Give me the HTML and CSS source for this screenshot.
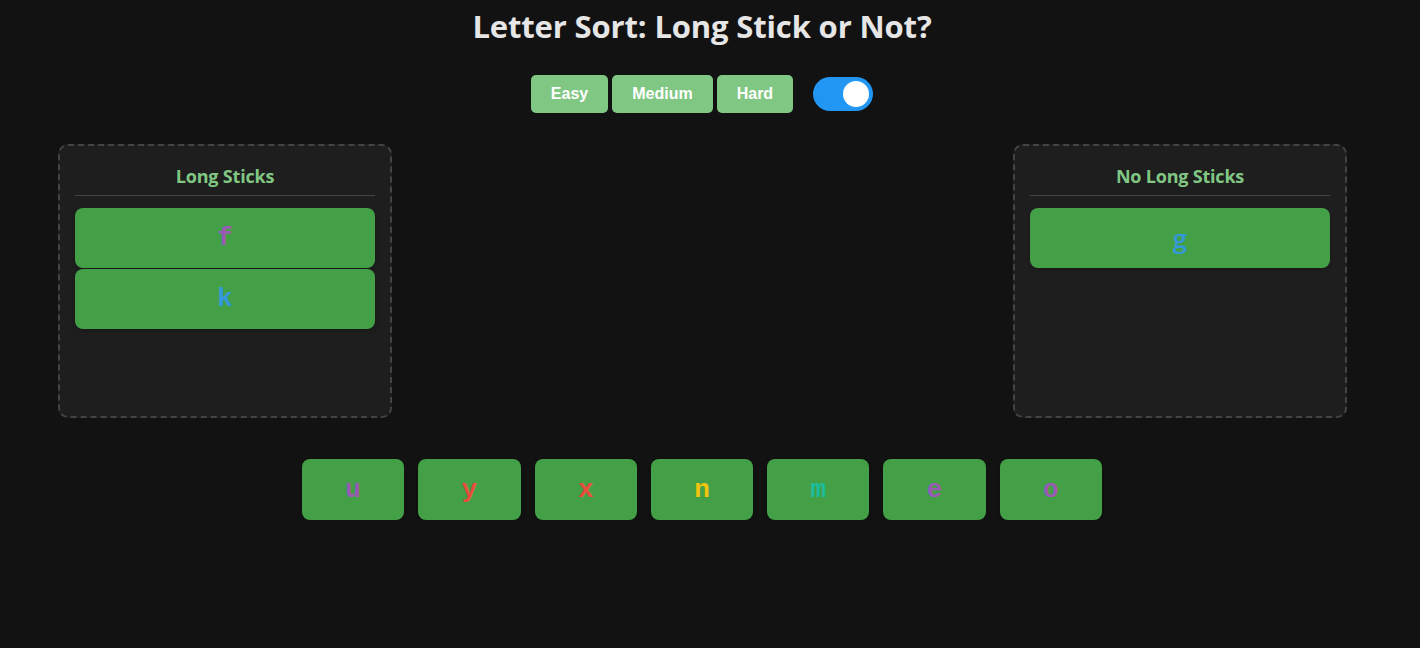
FILE: index.html
```html
<!DOCTYPE html>
<html lang="en">
<head>
<meta charset="utf-8">
<title>Letter Sort</title>
<link rel="stylesheet" href="styles.css">
</head>
<body>
<div class="app">
  <h1 class="title">Letter Sort: Long Stick or Not?</h1>
  <div class="controls">
    <button class="level">Easy</button>
    <button class="level">Medium</button>
    <button class="level">Hard</button>
    <label class="switch"><span class="knob"></span></label>
  </div>
  <div class="zones">
    <div class="zone">
      <h3 class="zone-title">Long Sticks</h3>
      <div class="zone-list">
        <div class="card"><span class="c-purple">f</span></div>
        <div class="card"><span class="c-blue">k</span></div>
      </div>
    </div>
    <div class="zone">
      <h3 class="zone-title">No Long Sticks</h3>
      <div class="zone-list">
        <div class="card"><span class="c-blue sans">g</span></div>
      </div>
    </div>
  </div>
  <div class="pool">
    <div class="card pool-card"><span class="c-purple">u</span></div>
    <div class="card pool-card"><span class="c-red">y</span></div>
    <div class="card pool-card"><span class="c-red">x</span></div>
    <div class="card pool-card"><span class="c-yellow">n</span></div>
    <div class="card pool-card"><span class="c-teal">m</span></div>
    <div class="card pool-card"><span class="c-purple">e</span></div>
    <div class="card pool-card"><span class="c-purple">o</span></div>
  </div>
</div>
</body>
</html>
```

FILE: styles.css
```css
html, body {
  margin: 0;
  padding: 0;
  background: #121212;
}
body {
  font-family: "Open Sans", "Noto Sans", sans-serif;
  color: #e0e0e0;
}
.app {
  width: 1404px;
}
.title {
  margin: 4px 0 0;
  text-align: center;
  font-size: 31px;
  line-height: 44px;
  font-weight: 700;
  color: #e6e6e6;
  letter-spacing: -0.15px;
}
.controls {
  margin-top: 27px;
  display: flex;
  justify-content: center;
  align-items: center;
  gap: 4px;
}
.level {
  background: #81c784;
  color: #fff;
  border: none;
  border-radius: 5px;
  font-family: "Liberation Sans", Arial, sans-serif;
  font-weight: 700;
  font-size: 16px;
  height: 38px;
  padding: 0 20px;
}
.switch {
  margin-left: 16px;
  width: 60px;
  height: 34px;
  border-radius: 17px;
  background: #2196f3;
  display: flex;
  align-items: center;
  justify-content: flex-end;
  padding: 0 4px;
  box-sizing: border-box;
}
.knob {
  width: 26px;
  height: 26px;
  border-radius: 50%;
  background: #fff;
}
.zones {
  margin-top: 31px;
  display: flex;
  justify-content: space-between;
  padding: 0 57px 0 58px;
}
.zone {
  width: 300px;
  height: 240px;
  padding: 15px;
  background: #1e1e1e;
  border: 2px dashed #444;
  border-radius: 10px;
}
.zone-title {
  margin: 0;
  text-align: center;
  font-size: 18px;
  line-height: 20px;
  padding: 5px 0 9px;
  font-weight: 700;
  color: #81c784;
  border-bottom: 1px solid #444;
  letter-spacing: -0.2px;
}
.zone-list {
  margin-top: 12px;
  display: flex;
  flex-direction: column;
  gap: 1px;
}
.card {
  height: 60px;
  background: #43a047;
  border-radius: 8px;
  display: flex;
  align-items: center;
  justify-content: center;
  font-family: "Courier New", Courier, "Nimbus Mono PS", FreeMono, "Liberation Mono", monospace;
  font-weight: 700;
  font-size: 26px;
  box-shadow: 0 2px 4px rgba(0,0,0,0.2);
}
.sans {
  font-family: "Open Sans", "Noto Sans", sans-serif;
  font-weight: 600;
}
.pool {
  margin-top: 41px;
  display: flex;
  justify-content: center;
  gap: 14px;
}
.pool-card {
  width: 102.3px;
  height: 61px;
}
.c-purple { color: #9b59b6; }
.c-blue { color: #3498db; }
.c-red { color: #e74c3c; }
.c-yellow { color: #f1c40f; }
.c-teal { color: #1abc9c; }
```
